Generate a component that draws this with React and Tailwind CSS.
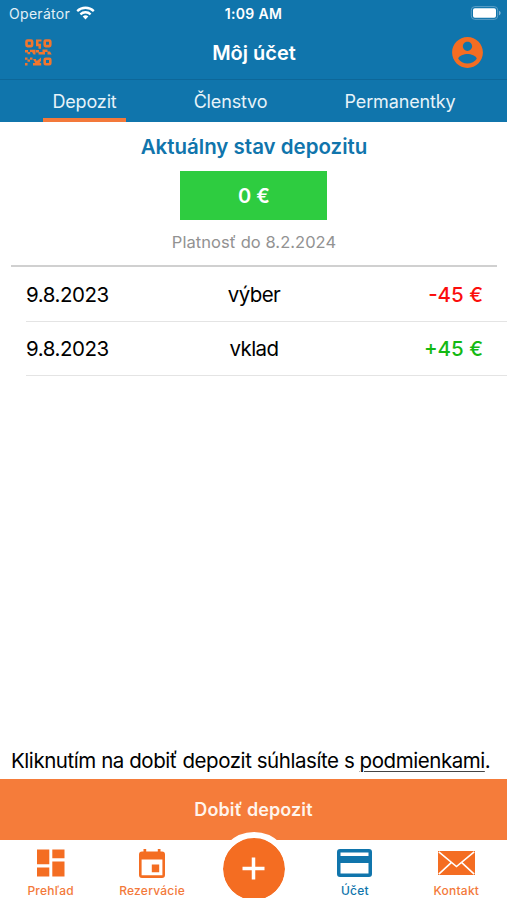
const QrIcon = () => (
  <svg width="27" height="27" viewBox="0 0 27 27" fill="#f2762e">
    <g fill="none" stroke="#f2762e" strokeWidth="2.6">
      <rect x="1.5" y="1.5" width="5.6" height="5.600" rx="1" />
      <rect x="19.700" y="1.500" width="5.600" height="5.600" rx="1" />
      <rect x="19.700" y="19.700" width="5.600" height="5.600" rx="1" />
    </g>
    <path d="M11 .5h5.500v2h-3v2.300h2.500v5h-2.500v-2.500H11zM0 11h3v2.500H0zM2.500 13h2.700v2.300H2.500zM5 10.800h5.500v4.700H8.500L7 13H5zM11 11h3v2.500h-3zM13.500 13h4v-2.500h5v2.500h-2.500v2.500h-6.500zM22.500 12.500h2.500l1.700 3h-4.200zM0 18.500h2.500v2.300H0zM0 24h2.500v2.500H0zM2.500 20.500h2.500v2.300H2.500zM5 18.500h2.500v2.300H5zM8 20h3v1.500h1.500l3.500-3v3.500l-1.500 1.500 1.700.8v2.200H8v-2.500h2.300z" />
  </svg>
);

const WifiIcon = () => (
  <svg width="19" height="14" viewBox="0 0 19 14" fill="none" stroke="#fff" strokeWidth="2.300">
    <path d="M1.200 5.100a12 12 0 0 1 16.600 0M4.400 8.300a7.400 7.400 0 0 1 10.200 0" />
    <path d="M9.500 13.500 6.700 10.600a4.100 4.100 0 0 1 5.600 0z" fill="#fff" stroke="none" />
  </svg>
);

const BatteryIcon = () => (
  <svg width="31" height="14" viewBox="0 0 31 14">
    <rect x="1.300" y=".6" width="26.400" height="12.800" rx="3.500" fill="none" stroke="#5c9fc7" />
    <rect x="3" y="2.300" width="23" height="9.400" rx="1.800" fill="#fff" />
    <path d="M29 4.700c2.200.8 2.200 3.800 0 4.600z" fill="#7fb3d3" />
  </svg>
);

const AccountIcon = () => (
  <svg width="37" height="37" viewBox="0 0 24 24" fill="#f46d22">
    <path d="M12 2C6.480 2 2 6.480 2 12s4.480 10 10 10 10-4.480 10-10S17.520 2 12 2zm0 3c1.660 0 3 1.340 3 3s-1.340 3-3 3-3-1.340-3-3 1.340-3 3-3zm0 14.200c-2.500 0-4.710-1.280-6-3.220.03-1.990 4-3.080 6-3.080 1.990 0 5.970 1.090 6 3.080-1.290 1.940-3.500 3.220-6 3.220z" />
  </svg>
);

const OverviewIcon = () => (
  <svg width="28" height="28" viewBox="0 0 28 28" fill="#f46d22">
    <path d="M0 .5h12.300v14.800H0zM15.300.5h12.200v8.800H15.300zM0 18.500h12.300v9H0zM15.300 12.500h12.200v15H15.300z" />
  </svg>
);

const CalendarIcon = () => (
  <svg width="26" height="29" viewBox="0 0 26 29">
    <path fill="#f46d22" fillRule="evenodd" d="M4.500 0h2.700v2.500h11.600V0h2.700v2.500H23a3 3 0 0 1 3 3V26a3 3 0 0 1-3 3H3a3 3 0 0 1-3-3V5.500a3 3 0 0 1 3-3h1.500zM2.600 10.500V26.300h20.800V10.500zM12.800 15.500h7.400v7.700h-7.400z" />
  </svg>
);

const CardIcon = () => (
  <svg width="35" height="28" viewBox="0 0 35 28">
    <path fill="#1075ac" fillRule="evenodd" d="M3 0h29a3 3 0 0 1 3 3v22a3 3 0 0 1-3 3H3a3 3 0 0 1-3-3V3a3 3 0 0 1 3-3zM3.500 3.500V7h28V3.500zM3.500 14v10.500h28V14z" />
  </svg>
);

const MailIcon = () => (
  <svg width="37" height="24" viewBox="0 0 37 24">
    <rect width="37" height="24" fill="#f46d22" />
    <path d="M.8.800 18.500 15.500 36.200.800M.8 23.200 13.500 11.400M36.200 23.200 23.500 11.400" fill="none" stroke="#fff" strokeWidth="1.600" />
  </svg>
);

const rows = [
  { date: "9.8.2023", type: "výber", amount: "-45 €", color: "text-[#fb0d0d]" },
  { date: "9.8.2023", type: "vklad", amount: "+45 €", color: "text-[#13b913]" },
];

function NavItem({ icon, label, color = "text-[#f3793a]" }) {
  return (
    <div className={`flex flex-1 flex-col items-center ${color}`}>
      <div className="flex h-[46px] items-center justify-center">{icon}</div>
      <span className="-mt-[2px] text-[12px] leading-[14px] font-medium tracking-[0.02em] whitespace-nowrap">{label}</span>
    </div>
  );
}

export default function App() {
  return (
    <div className="flex h-[900px] w-[507px] flex-col overflow-hidden bg-white font-['Inter','Liberation_Sans',sans-serif] text-black">
      <header className="h-[122px] shrink-0 bg-[#1075ac] text-white">
        <div className="grid h-7 grid-cols-3 items-center pb-[2px]">
          <div className="flex items-center gap-[6px] pl-[9px] text-[14px] tracking-[0.3px] text-[#e3f0f7]">
            <span>Operátor</span>
            <WifiIcon />
          </div>
          <span className="text-center text-[14px] font-semibold tracking-[0.35px]">1:09 AM</span>
          <div className="flex justify-end pr-[6px]"><BatteryIcon /></div>
        </div>
        <div className="grid h-[52px] grid-cols-3 items-center border-b border-[#0d6799] pb-[2px]">
          <div className="pl-[25px]"><QrIcon /></div>
          <h1 className="pl-px text-center text-[20px] font-semibold">Môj účet</h1>
          <div className="flex justify-end pr-[21.500px]"><AccountIcon /></div>
        </div>
        <nav className="flex h-[42px] text-[18px] tracking-[-0.15px] text-[#e7f3f9]">
          <div className="ml-[43px] flex h-full w-[83px] items-center justify-center border-b-4 border-[#f3793a] pt-[4px]">Depozit</div>
          <div className="ml-[58px] flex w-[93px] items-center justify-center">Členstvo</div>
          <div className="ml-[58px] flex w-[130px] items-center justify-center">Permanentky</div>
        </nav>
      </header>

      <main className="flex flex-1 flex-col">
        <section className="mr-[10px] ml-[11px] flex h-[145px] shrink-0 flex-col items-center border-b-2 border-[#d0d0d0]">
          <h2 className="mt-[12px] text-[20.500px] leading-[26px] font-semibold whitespace-nowrap text-[#1075ac]">Aktuálny stav depozitu</h2>
          <div className="mt-[11px] mr-px flex h-[49px] w-[147px] items-center justify-center bg-[#2ecc40] pl-px text-[20px] font-semibold text-white">0 €</div>
          <p className="mt-[11px] text-[16.500px] leading-[22px] tracking-[0.05px] text-[#929292]">Platnosť do 8.2.2024</p>
        </section>
        <ul className="pl-[26px]">
          {rows.map((r) => (
            <li key={r.type} className="grid h-[54.500px] grid-cols-[140px_176px_1fr] items-center border-b border-[#e4e4e4] pt-[3px] pr-[24px] text-[20.500px]">
              <span className="tracking-[-0.45px]">{r.date}</span>
              <span className="text-center tracking-[-0.6px]">{r.type}</span>
              <span className={`text-right font-medium ${r.color}`}>{r.amount}</span>
            </li>
          ))}
        </ul>
        <p className="mt-auto mb-[4px] pl-[11px] text-[20.500px] leading-[28px] tracking-[-0.44px] whitespace-nowrap">
          Kliknutím na dobiť depozit súhlasíte s <span className="underline decoration-[#444] decoration-1 underline-offset-[3px]">podmienkami</span>.
        </p>
      </main>

      <button className="h-[61px] shrink-0 bg-[#f57c3a] text-[18px] font-semibold tracking-[0.1px] text-[#fff4ec]">Dobiť depozit</button>

      <footer className="relative flex h-[60px] shrink-0 bg-white">
        <NavItem icon={<OverviewIcon />} label="Prehľad" />
        <NavItem icon={<CalendarIcon />} label="Rezervácie" />
        <div className="relative flex-1">
          <div className="absolute -top-[8px] left-1/2 flex h-[66px] w-[74px] -translate-x-1/2 justify-center overflow-hidden">
            <div className="h-[74px] w-[74px] shrink-0 rounded-full border-[6.500px] border-white bg-[#f46d22] bg-clip-padding">
              <svg width="61" height="61" viewBox="0 0 61 61" stroke="#fff" strokeWidth="3.500">
                <path d="M30.500 19.500v22M19.500 30.500h22" />
              </svg>
            </div>
          </div>
        </div>
        <NavItem icon={<CardIcon />} label="Účet" color="text-[#1075ac]" />
        <NavItem icon={<MailIcon />} label="Kontakt" />
      </footer>
    </div>
  );
}
